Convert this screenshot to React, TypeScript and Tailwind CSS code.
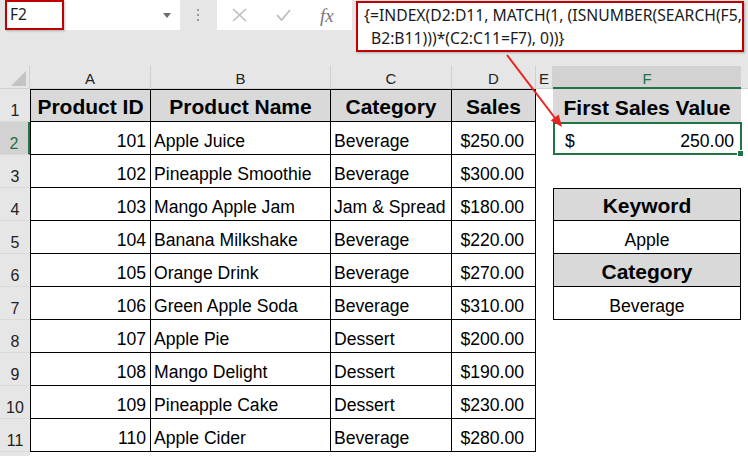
import React from "react";

const products = [
	["101", "Apple Juice", "Beverage", "$250.00"],
	["102", "Pineapple Smoothie", "Beverage", "$300.00"],
	["103", "Mango Apple Jam", "Jam & Spread", "$180.00"],
	["104", "Banana Milkshake", "Beverage", "$220.00"],
	["105", "Orange Drink", "Beverage", "$270.00"],
	["106", "Green Apple Soda", "Beverage", "$310.00"],
	["107", "Apple Pie", "Dessert", "$200.00"],
	["108", "Mango Delight", "Dessert", "$190.00"],
	["109", "Pineapple Cake", "Dessert", "$230.00"],
	["110", "Apple Cider", "Beverage", "$280.00"],
];

const colLetters = ["A", "B", "C", "D", "E", "F"];

const headCell =
	"flex items-end justify-center pb-[2px] bg-[#d9d9d9] font-bold text-[21px] leading-[24px] border-black border-t border-b border-r whitespace-nowrap";
const dataCell =
	"flex items-end pb-[3px] text-[17.6px] leading-[20px] border-black border-b border-r whitespace-nowrap overflow-hidden";

function RowHeader({ n, active }: { n: number; active?: boolean }) {
	return (
		<div
			className={`flex items-end justify-center pb-[1px] text-[16px] leading-[18px] border-b border-[#dadada] ${
				active ? "bg-[#d2d2d2] text-[#217346] border-r-2 border-r-[#217346]" : "bg-[#e6e6e6] text-[#222]"
			}`}
		>
			{n}
		</div>
	);
}

function FCell({ row }: { row: number }) {
	if (row === 1)
		return (
			<div className="flex items-end justify-center pb-[2px] bg-[#d9d9d9] font-bold text-[21px] leading-[24px] whitespace-nowrap">
				First Sales Value
			</div>
		);
	if (row === 2)
		return (
			<div className="relative flex items-end justify-between pl-[10px] pr-[6px] pb-[2px] text-[17.6px] leading-[20px] border-2 border-[#217346] -mr-px">
				<span>$</span>
				<span>250.00</span>
				<span className="absolute -right-[4px] -bottom-[4px] w-[7px] h-[7px] bg-[#217346] border border-white" />
			</div>
		);
	if (row === 4 || row === 6)
		return (
			<div
				className={`flex items-end justify-center pb-[2px] bg-[#d9d9d9] font-bold text-[21px] leading-[24px] border-black border-l border-r border-b ${
					row === 4 ? "border-t" : ""
				}`}
			>
				{row === 4 ? "Keyword" : "Category"}
			</div>
		);
	if (row === 5 || row === 7)
		return (
			<div className="flex items-end justify-center pb-[3px] text-[17.6px] leading-[20px] border-black border-l border-r border-b">
				{row === 5 ? "Apple" : "Beverage"}
			</div>
		);
	return <div />;
}

function FormulaBar() {
	return (
		<div className="flex h-[66px] items-start font-['Noto_Sans','Liberation_Sans',sans-serif] text-[#1a1a1a]">
			<div className="ml-[5px] flex h-[30px] w-[175px] items-center justify-between bg-white pr-[9px]">
				<div className="flex h-[30px] w-[59px] items-center border-2 border-[#c00000] pl-[3px] text-[15.5px] shadow-[1px_1px_2px_rgba(0,0,0,0.25)]">
					F2
				</div>
				<svg width="8" height="5" viewBox="0 0 8 5">
					<path d="M0 0h8L4 5z" fill="#6d6d6d" />
				</svg>
			</div>
			<div className="ml-[17px] mt-[9px] flex flex-col gap-[3px]">
				<span className="h-[2px] w-[2px] bg-[#9a9a9a]" />
				<span className="h-[2px] w-[2px] bg-[#9a9a9a]" />
				<span className="h-[2px] w-[2px] bg-[#9a9a9a]" />
			</div>
			<div className="ml-[18px] flex h-[30px] w-[135px] items-center bg-white">
				<svg className="ml-[15px]" width="15" height="14" viewBox="0 0 15 14">
					<path d="M1 1l13 12M14 1L1 13" stroke="#bdbdbd" strokeWidth="1.6" />
				</svg>
				<svg className="ml-[29px]" width="15" height="12" viewBox="0 0 15 12">
					<path d="M1 6l4.5 5L14 1" stroke="#bdbdbd" strokeWidth="1.8" fill="none" />
				</svg>
				<span className="ml-[29px] font-['Liberation_Serif',serif] text-[19px] italic leading-none text-[#777]">
					fx
				</span>
			</div>
			<div className="ml-[4px] mt-px flex h-[51px] w-[388px] flex-col border-2 border-[#c00000] bg-white pl-[6px] pt-[1px] text-[15.7px] leading-[23px] whitespace-nowrap shadow-[1px_1px_2px_rgba(0,0,0,0.25)]">
				<span>{"{=INDEX(D2:D11, MATCH(1, (ISNUMBER(SEARCH(F5,"}</span>
				<span className="pl-[7px]">{"B2:B11)))*(C2:C11=F7), 0))}"}</span>
			</div>
		</div>
	);
}

export default function App() {
	return (
		<div className="relative h-[456px] w-[748px] overflow-hidden bg-[#e6e6e6] font-['Liberation_Sans',Arial,sans-serif] text-black">
			<FormulaBar />

			<div className="grid h-[390px] grid-cols-[30px_121px_180px_121px_84px_17px_188px_1fr] grid-rows-[23px_repeat(11,33px)_1fr] bg-white">
				{/* column headers */}
				<div className="relative border-r border-b border-[#d0d0d0] bg-[#e6e6e6]">
					<svg className="absolute right-[3px] bottom-[2px]" width="15" height="15" viewBox="0 0 15 15">
						<path d="M15 0V15H0z" fill="#c3c3c3" />
					</svg>
				</div>
				{colLetters.map((c) => (
					<div
						key={c}
						className={`flex items-center justify-center pt-[3px] text-[15px] leading-[17px] ${
							c === "F"
								? "bg-[#d2d2d2] text-[#217346] border-b-2 border-[#217346]"
								: "bg-[#e6e6e6] text-[#222] border-r border-b border-[#d0d0d0]"
						}`}
					>
						{c}
					</div>
				))}
				<div className="bg-[#e6e6e6] border-b border-[#d0d0d0]" />

				{/* row 1 */}
				<RowHeader n={1} />
				<div className={`${headCell} border-l`}>Product ID</div>
				<div className={headCell}>Product Name</div>
				<div className={headCell}>Category</div>
				<div className={headCell}>Sales</div>
				<div />
				<FCell row={1} />
				<div />

				{products.map((p, i) => {
					const row = i + 2;
					return (
						<React.Fragment key={p[0]}>
							<RowHeader n={row} active={row === 2} />
							<div className={`${dataCell} border-l justify-end pr-[4px]`}>{p[0]}</div>
							<div className={`${dataCell} pl-[3px]`}>{p[1]}</div>
							<div className={`${dataCell} pl-[3px]`}>{p[2]}</div>
							<div className={`${dataCell} justify-end pr-[11px]`}>{p[3]}</div>
							<div />
							<FCell row={row} />
							<div />
						</React.Fragment>
					);
				})}

				<div className="bg-[#e6e6e6]" />
			</div>

			{/* annotation arrow */}
			<svg className="pointer-events-none absolute inset-0" width="748" height="456" viewBox="0 0 748 456">
				<line x1="507" y1="55" x2="555" y2="118" stroke="#e8231f" strokeWidth="2" />
				<path d="M562 127L558.7 114.5L550.7 120.5z" fill="#e8231f" />
			</svg>
		</div>
	);
}
